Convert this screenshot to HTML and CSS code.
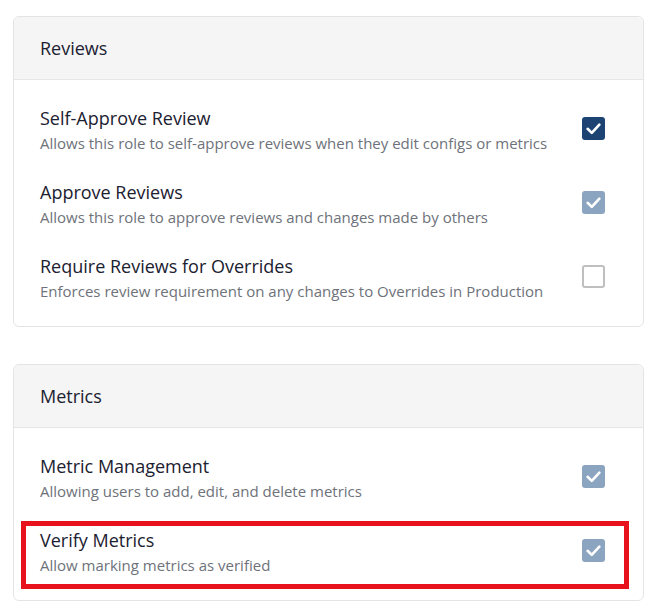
FILE: index.html
```html
<!DOCTYPE html>
<html lang="en">
<head>
<meta charset="utf-8">
<title>Permissions</title>
<link rel="stylesheet" href="styles.css">
</head>
<body>
<div class="page">
  <section class="card">
    <header class="card-header">Reviews</header>
    <div class="card-body">
      <div class="row">
        <div class="text">
          <div class="title">Self-Approve Review</div>
          <div class="desc">Allows this role to self-approve reviews when they edit configs or metrics</div>
        </div>
        <span class="check on">
          <svg viewBox="0 0 23 23" width="23" height="23"><rect width="23" height="23" rx="3"/><path d="M5.6 11.8 L9.8 15.9 L17.4 7.6"/></svg>
        </span>
      </div>
      <div class="row">
        <div class="text">
          <div class="title">Approve Reviews</div>
          <div class="desc">Allows this role to approve reviews and changes made by others</div>
        </div>
        <span class="check dim">
          <svg viewBox="0 0 23 23" width="23" height="23"><rect width="23" height="23" rx="3"/><path d="M5.6 11.8 L9.8 15.9 L17.4 7.6"/></svg>
        </span>
      </div>
      <div class="row">
        <div class="text">
          <div class="title">Require Reviews for Overrides</div>
          <div class="desc">Enforces review requirement on any changes to Overrides in Production</div>
        </div>
        <span class="check off"></span>
      </div>
    </div>
  </section>

  <section class="card">
    <header class="card-header">Metrics</header>
    <div class="card-body">
      <div class="row">
        <div class="text">
          <div class="title">Metric Management</div>
          <div class="desc">Allowing users to add, edit, and delete metrics</div>
        </div>
        <span class="check dim">
          <svg viewBox="0 0 23 23" width="23" height="23"><rect width="23" height="23" rx="3"/><path d="M5.6 11.8 L9.8 15.9 L17.4 7.6"/></svg>
        </span>
      </div>
      <div class="row highlight">
        <div class="text">
          <div class="title">Verify Metrics</div>
          <div class="desc">Allow marking metrics as verified</div>
        </div>
        <span class="check dim">
          <svg viewBox="0 0 23 23" width="23" height="23"><rect width="23" height="23" rx="3"/><path d="M5.6 11.8 L9.8 15.9 L17.4 7.6"/></svg>
        </span>
      </div>
    </div>
  </section>
</div>
</body>
</html>
```
FILE: styles.css
```css
html, body {
  margin: 0;
  padding: 0;
  background: #ffffff;
}

body {
  font-family: "Open Sans", "Noto Sans", sans-serif;
  color: #1b2130;
}

.page {
  padding: 16px 10px 0 13px;
  display: flex;
  flex-direction: column;
  gap: 37px;
}

.card {
  border: 1px solid #e4e4e4;
  border-radius: 6px;
  background: #fff;
}

.card-header {
  background: #f5f5f5;
  border-bottom: 1px solid #e6e6e6;
  border-radius: 6px 6px 0 0;
  padding: 19px 26px;
  font-size: 18px;
  line-height: 24px;
  font-weight: 500;
  color: #1b2130;
}

.card-body {
  padding: 26px 0 24px;
  display: flex;
  flex-direction: column;
  gap: 26px;
}

.row {
  position: relative;
  display: flex;
  align-items: center;
  justify-content: space-between;
  padding: 0 38px 0 26px;
}

.title {
  font-size: 18px;
  line-height: 24px;
  font-weight: 500;
  color: #1b2130;
}

.desc {
  margin-top: 2px;
  font-size: 15px;
  line-height: 22px;
  color: #6e727a;
}

.check {
  width: 23px;
  height: 23px;
  flex: none;
  margin-bottom: 3px;
  box-sizing: border-box;
}

.check svg {
  display: block;
}

.check path {
  fill: none;
  stroke: #ffffff;
  stroke-width: 2.6;
  stroke-linecap: round;
  stroke-linejoin: round;
}

.check.on rect {
  fill: #1c4372;
}

.check.dim rect {
  fill: #8ba4c0;
}

.check.off {
  border: 2px solid #bfbfbf;
  border-radius: 3px;
  background: #fff;
}

.highlight::after {
  content: "";
  position: absolute;
  top: -7px;
  bottom: -13px;
  left: 7px;
  right: 14px;
  border: 5px solid #e8121c;
  pointer-events: none;
}
```
